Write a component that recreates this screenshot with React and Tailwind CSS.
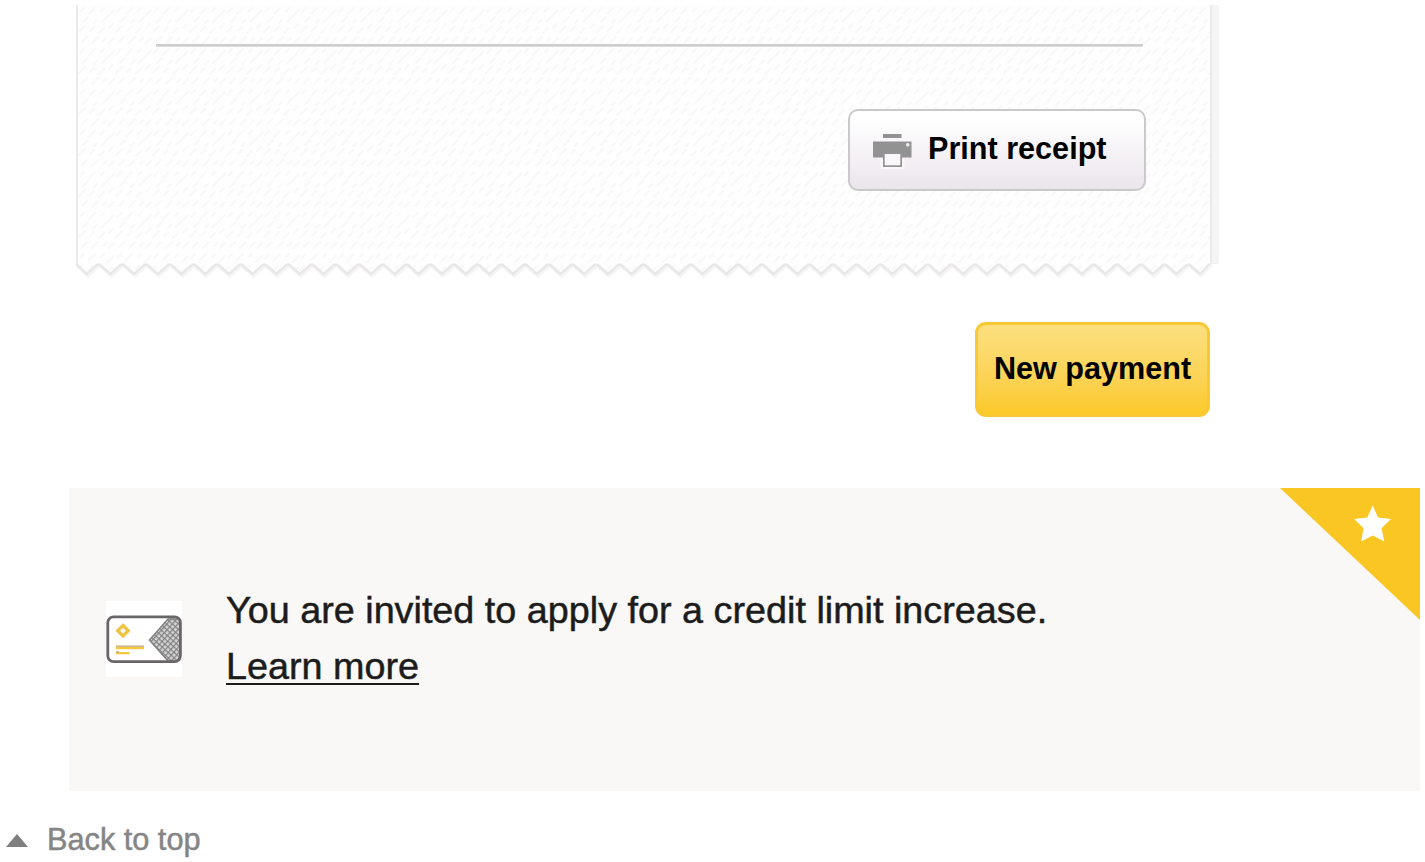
import React from "react";

const STEP = 23.69;
const TEETH = 48;

function tornPath() {
  let d = "M1 0 L1 1.5 L10.7 11";
  for (let i = 1; i < TEETH; i++) {
    const valley = 10.7 + i * STEP;
    d += ` L${(valley - STEP / 2).toFixed(2)} 0.5 L${valley.toFixed(2)} 11`;
  }
  return d + " L1134.5 0";
}

function PaperPattern({ id }) {
  return (
    <pattern id={id} width="37" height="41" patternUnits="userSpaceOnUse">
      <rect width="37" height="41" fill="#fefefe" />
      <path
        d="M2 7l4-4M11 9l6-6M23 6l3-3M31 10l5-5M5 17l5-5M16 18l3-3M24 17l6-6M1 27l6-6M12 26l4-4M21 28l5-5M31 23l4-4M4 37l5-5M14 38l6-6M25 36l3-3M31 38l5-5"
        stroke="#f8f8f8"
        strokeWidth="1.8"
        strokeLinecap="round"
      />
    </pattern>
  );
}

function TornEdge() {
  const d = tornPath();
  return (
    <svg className="block h-[16px] w-[1144px]" viewBox="0 0 1144 16" fill="none">
      <defs>
        <PaperPattern id="paper-edge" />
      </defs>
      <path d={d} transform="translate(1 1.5)" stroke="#f6f5f5" strokeWidth="4" />
      <path d={d} fill="url(#paper-edge)" stroke="#e9e7e7" strokeWidth="2.4" strokeLinejoin="round" />
      <path d="M2 0H1133" stroke="#fefefe" strokeWidth="1" />
      <path d="M1136 0h7l-1 1h-8z" fill="#f0efef" />
    </svg>
  );
}

function PrinterIcon() {
  return (
    <svg className="h-[36px] w-[40px] shrink-0" viewBox="0 0 40 36">
      <path d="M9.7 26v9h21.6v-9" fill="none" stroke="#fbf9fb" strokeWidth="2" />
      <rect x="11" y="1" width="18.5" height="4" fill="#929292" />
      <path d="M1 8.5h38.5v16H30v9.5H11v-9.5H1z" fill="#929292" />
      <rect x="12.7" y="21" width="15.6" height="11.3" fill="#f9f7f9" />
      <rect x="34" y="10" width="3.5" height="3.5" rx="1.5" fill="#ededed" />
    </svg>
  );
}

function CardIcon() {
  return (
    <svg className="h-[76px] w-[76px] shrink-0" viewBox="0 0 76 76">
      <defs>
        <pattern id="mesh" width="4" height="4" patternUnits="userSpaceOnUse" patternTransform="rotate(42)">
          <rect width="4" height="4" fill="#d8d8d8" />
          <path d="M0 0H4M0 0V4" stroke="#838383" strokeWidth="2.6" />
        </pattern>
        <clipPath id="card-shape">
          <rect x="1.5" y="15.5" width="73" height="45" rx="5.5" />
        </clipPath>
      </defs>
      <rect width="76" height="76" fill="#fff" />
      <g clipPath="url(#card-shape)">
        <path d="M43.5 39L62 18H76V60H62Z" fill="url(#mesh)" stroke="#828282" strokeWidth="1.6" />
      </g>
      <rect x="1.8" y="15.8" width="72.6" height="44.8" rx="5.8" fill="none" stroke="#686666" strokeWidth="2.8" />
      <path d="M17 24.5L22.2 29.7L17 34.9L11.8 29.7Z" fill="#fff" stroke="#efc343" strokeWidth="3.3" />
      <path d="M10 45.2h28" stroke="#c9b98c" strokeWidth="1.6" />
      <path d="M10 47.2h28M10 52.2h13.5" stroke="#f4c740" strokeWidth="2.2" />
      <path d="M10 51h3" stroke="#c1ae84" strokeWidth="1.6" />
    </svg>
  );
}

function Receipt() {
  return (
    <section className="ml-[76px] w-[1144px]">
      <div className="flex h-[258px]">
        <div className="relative w-[1136px] border-x-2 border-[#ebeaea]">
          <svg className="absolute inset-0 h-full w-full">
            <defs>
              <PaperPattern id="paper" />
            </defs>
            <rect width="100%" height="100%" fill="url(#paper)" />
          </svg>
          <div className="relative flex flex-col pl-[78px] pr-[64px]">
            <div className="mt-[39px] h-[3px] w-[987px] border-b border-[#dcdcdc] bg-[#cecece]" />
            <button className="mt-[62px] flex h-[82px] w-[298px] items-start self-end rounded-[10px] border-2 border-[#cac8ca] bg-linear-to-b from-white from-10% to-[#ebe5ec] pl-[22px] pt-[22px]">
              <PrinterIcon />
              <span className="ml-[16px] -mt-[3px] whitespace-nowrap text-[30.6px] font-bold leading-[36px] text-black">
                Print receipt
              </span>
            </button>
          </div>
        </div>
        <div className="w-[7px] bg-[#f6f5f5]" />
      </div>
      <TornEdge />
    </section>
  );
}

function Offer() {
  return (
    <section className="relative ml-[69px] mt-[71px] flex h-[303px] w-[1351px] bg-[#f9f8f7] pl-[37px]">
      <div className="pt-[113px]">
        <CardIcon />
      </div>
      <div className="ml-[44px] pt-[94px] text-[37.75px] leading-[56px] text-[#1c1c1c] [-webkit-text-stroke:0.5px_#1c1c1c]">
        <p className="whitespace-nowrap">You are invited to apply for a credit limit increase.</p>
        <a className="block w-fit cursor-pointer whitespace-nowrap underline decoration-[2px] underline-offset-[4px] [text-decoration-skip-ink:none]">
          Learn more
        </a>
      </div>
      <svg className="absolute right-0 top-0 h-[132px] w-[140px]" viewBox="0 0 140 132">
        <path d="M0 0H140V132Z" fill="#fac624" />
        <path
          d="M92.7 17.5L98 29.5L111 31L101.5 40.2L104.3 53.5L92.7 47.5L81.2 53.5L83.5 40.2L74.2 31L87.3 29.5Z"
          fill="#fff"
        />
      </svg>
    </section>
  );
}

export default function App() {
  return (
    <main className="h-[862px] w-[1425px] overflow-hidden bg-white pt-[5px] font-['Liberation_Sans',Arial,sans-serif]">
      <Receipt />
      <button className="ml-[975px] mt-[43px] flex h-[95px] w-[235px] items-start justify-center rounded-[11px] border-[3px] border-[#fac832] bg-linear-to-b from-[#fce07f] to-[#fbc926] pt-[25px] text-[30.6px] font-bold leading-[36px] text-black">
        <span className="whitespace-nowrap">New payment</span>
      </button>
      <Offer />
      <a className="ml-[6px] mt-[31px] flex w-fit cursor-pointer items-start text-[30.7px] leading-[36px] text-[#858585] [-webkit-text-stroke:0.5px_#858585]">
        <svg className="mt-[12px] h-[13px] w-[22px]" viewBox="0 0 22 13">
          <path d="M11 0L22 13H0Z" fill="#7f7f7f" />
        </svg>
        <span className="ml-[19px] whitespace-nowrap">Back to top</span>
      </a>
    </main>
  );
}
